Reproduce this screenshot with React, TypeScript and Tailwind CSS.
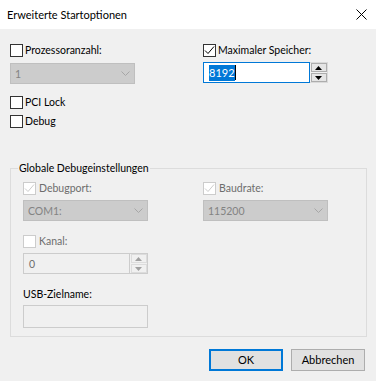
import React from "react";

function Check({ checked, disabled }: { checked?: boolean; disabled?: boolean }) {
  return (
    <div
      className={
        "w-[13px] h-[13px] shrink-0 border bg-white flex items-center justify-center " +
        (disabled ? "border-[#cccccc]" : "border-[#333333]")
      }
    >
      {checked && (
        <svg width="11" height="11" viewBox="0 0 11 11">
          <polyline
            points="1,5.5 4,8.5 10,1.5"
            fill="none"
            stroke={disabled ? "#cccccc" : "#000000"}
            strokeWidth="1"
          />
        </svg>
      )}
    </div>
  );
}

function CheckRow({
  label,
  checked,
  disabled,
  gap = "gap-[3px]",
  className = "",
}: {
  label: string;
  checked?: boolean;
  disabled?: boolean;
  gap?: string;
  className?: string;
}) {
  return (
    <div className={"flex items-center h-[13px] " + gap + " " + className}>
      <Check checked={checked} disabled={disabled} />
      <span className={"leading-[13px] whitespace-nowrap " + (disabled ? "text-[#6d6d6d]" : "text-black")}>
        {label}
      </span>
    </div>
  );
}

function Combo({ value, className = "" }: { value: string; className?: string }) {
  return (
    <div
      className={
        "w-[125px] h-[21px] bg-[#cccccc] border border-[#bfbfbf] flex items-center justify-between pl-[4px] pr-[4px] " +
        className
      }
    >
      <span className="text-[#838383] leading-[16px]">{value}</span>
      <svg width="9" height="5" viewBox="0 0 9 5">
        <polyline points="0.5,0.5 4.5,4.5 8.5,0.5" fill="none" stroke="#a6a6a6" strokeWidth="1" />
      </svg>
    </div>
  );
}

function Arrow({ up, color }: { up?: boolean; color: string }) {
  return (
    <svg width="7" height="4" viewBox="0 0 7 4">
      <polygon points={up ? "3.5,0 7,4 0,4" : "0,0 7,0 3.5,4"} fill={color} />
    </svg>
  );
}

function Spin({ disabled }: { disabled?: boolean }) {
  const btn =
    "h-[9px] w-[16px] flex items-center justify-center border " +
    (disabled ? "border-[#dcdcdc] bg-[#f0f0f0]" : "border-[#adadad] bg-[#e5e5e5]");
  const col = disabled ? "#a0a0a0" : "#000000";
  return (
    <div
      className={
        "w-[18px] h-[21px] border flex flex-col items-center justify-center gap-[1px] " +
        (disabled ? "border-[#cccccc] border-l-0" : "border-[#dadada] border-l-0")
      }
    >
      <div className={btn}>
        <Arrow up color={col} />
      </div>
      <div className={btn}>
        <Arrow color={col} />
      </div>
    </div>
  );
}

export default function App() {
  return (
    <div className="w-[376px] h-[381px] flex flex-col font-['Lato',sans-serif] text-[10.5px] text-black overflow-hidden">
      <div className="h-[29px] bg-white flex items-center justify-between pl-[7px] pr-[9px] shrink-0">
        <span className="leading-[16px] text-[11px]">Erweiterte Startoptionen</span>
        <svg width="11" height="11" viewBox="0 0 11 11">
          <line x1="0.5" y1="0.5" x2="10.5" y2="10.5" stroke="#000" strokeWidth="1" />
          <line x1="10.5" y1="0.5" x2="0.5" y2="10.5" stroke="#000" strokeWidth="1" />
        </svg>
      </div>

      <div className="flex-1 bg-[#f0f0f0] pl-[10px] pt-[15px] flex flex-col">
        <div className="flex">
          <div className="w-[193px] flex flex-col">
            <CheckRow label="Prozessoranzahl:" gap="gap-[2px]" />
            <Combo value="1" className="mt-[6px]" />
            <CheckRow label="PCI Lock" gap="gap-[2px]" className="mt-[12px]" />
            <CheckRow label="Debug" gap="gap-[2px]" className="mt-[6px]" />
          </div>
          <div className="flex flex-col">
            <CheckRow label="Maximaler Speicher:" checked gap="gap-[2px]" />
            <div className="flex mt-[5px]">
              <div className="w-[107px] h-[21px] border border-[#0078d7] bg-white flex items-center pl-[5px]">
                <span className="bg-[#0078d7] text-white leading-[16px] text-[11px]">8192</span>
                <span className="w-[1px] h-[15px] bg-black" />
              </div>
              <Spin />
            </div>
          </div>
        </div>

        <div className="relative mt-[40px] w-[357px] h-[169px] border border-[#dcdcdc] pl-[12px] pt-[13px] flex flex-col">
          <span className="absolute top-[-9px] left-[7px] px-[1px] bg-[#f0f0f0] leading-[16px] whitespace-nowrap">
            Globale Debugeinstellungen
          </span>
          <div className="flex">
            <div className="w-[180px] flex flex-col">
              <CheckRow label="Debugport:" checked disabled />
              <Combo value="COM1:" className="mt-[5px]" />
            </div>
            <div className="flex flex-col">
              <CheckRow label="Baudrate:" checked disabled />
              <Combo value="115200" className="mt-[5px]" />
            </div>
          </div>
          <CheckRow label="Kanal:" disabled className="mt-[14px]" />
          <div className="flex mt-[5px]">
            <div className="w-[107px] h-[21px] border border-[#cccccc] bg-[#f0f0f0] flex items-center pl-[5px]">
              <span className="text-[#6d6d6d] leading-[16px]">0</span>
            </div>
            <Spin disabled />
          </div>
          <div className="mt-[12px] leading-[16px]">USB-Zielname:</div>
          <div className="mt-[3px] w-[125px] h-[23px] border border-[#cccccc] bg-[#f0f0f0]" />
        </div>

        <div className="flex justify-end gap-[8px] mt-[12px] pr-[11px]">
          <div className="w-[74px] h-[22px] border-2 border-[#0078d7] bg-[#e1e1e1] flex items-center justify-center leading-[16px] text-[11px]">
            OK
          </div>
          <div className="w-[74px] h-[22px] border border-[#adadad] bg-[#e1e1e1] flex items-center justify-center leading-[16px] text-[11px]">
            Abbrechen
          </div>
        </div>
      </div>
    </div>
  );
}
